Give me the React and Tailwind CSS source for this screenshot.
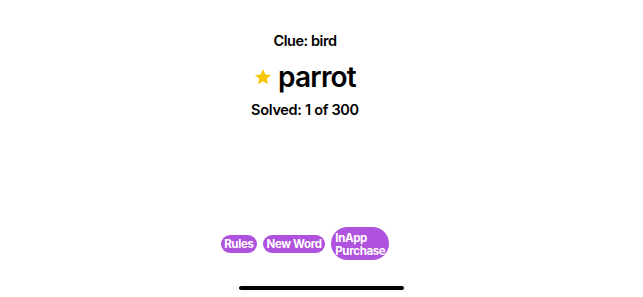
import React from "react";

const FONT = { fontFamily: "Inter, 'Noto Sans', sans-serif" };

function Star() {
  return (
    <svg viewBox="0 0 24 24" className="h-[18px] w-[18px]" fill="#f7c600">
      <path d="M12 1.5l3.2 7 7.6.7-5.8 5.1 1.8 7.5L12 17.8l-6.8 4 1.8-7.5-5.8-5.1 7.6-.7z" />
    </svg>
  );
}

const buttons = ["Rules", "New Word"];

export default function App() {
  return (
    <div className="relative h-[297px] w-[643px] overflow-hidden bg-white text-black" style={FONT}>
      <div className="flex flex-col items-center pr-[33px] pt-[32px]">
        <div className="text-[14.5px] font-semibold leading-[18px] tracking-[-0.45px]">Clue: bird</div>
        <div className="mt-[10px] flex items-center gap-[6px]">
          <Star />
          <span className="text-[28px] font-semibold leading-[34px] tracking-[-0.8px]">parrot</span>
        </div>
        <div className="mt-[6px] text-[14.5px] font-semibold leading-[20px] tracking-[-0.3px]">Solved: 1 of 300</div>
        <div className="mt-[107px] flex items-center gap-[6px]">
          {buttons.map((b) => (
            <div key={b} className="rounded-full bg-[#af52de] px-[3.5px] py-[2px] text-[11.5px] font-bold leading-[14px] tracking-[-0.35px] text-white">
              {b}
            </div>
          ))}
          <div className="rounded-full bg-[#af52de] px-[4px] pb-[2px] pt-[5px] text-[11.5px] font-bold leading-[13px] tracking-[-0.35px] text-white">
            InApp
            <br />
            Purchase
          </div>
        </div>
      </div>
      <div className="absolute bottom-[7px] left-[239px] h-[4px] w-[165px] rounded-full bg-black" />
    </div>
  );
}
